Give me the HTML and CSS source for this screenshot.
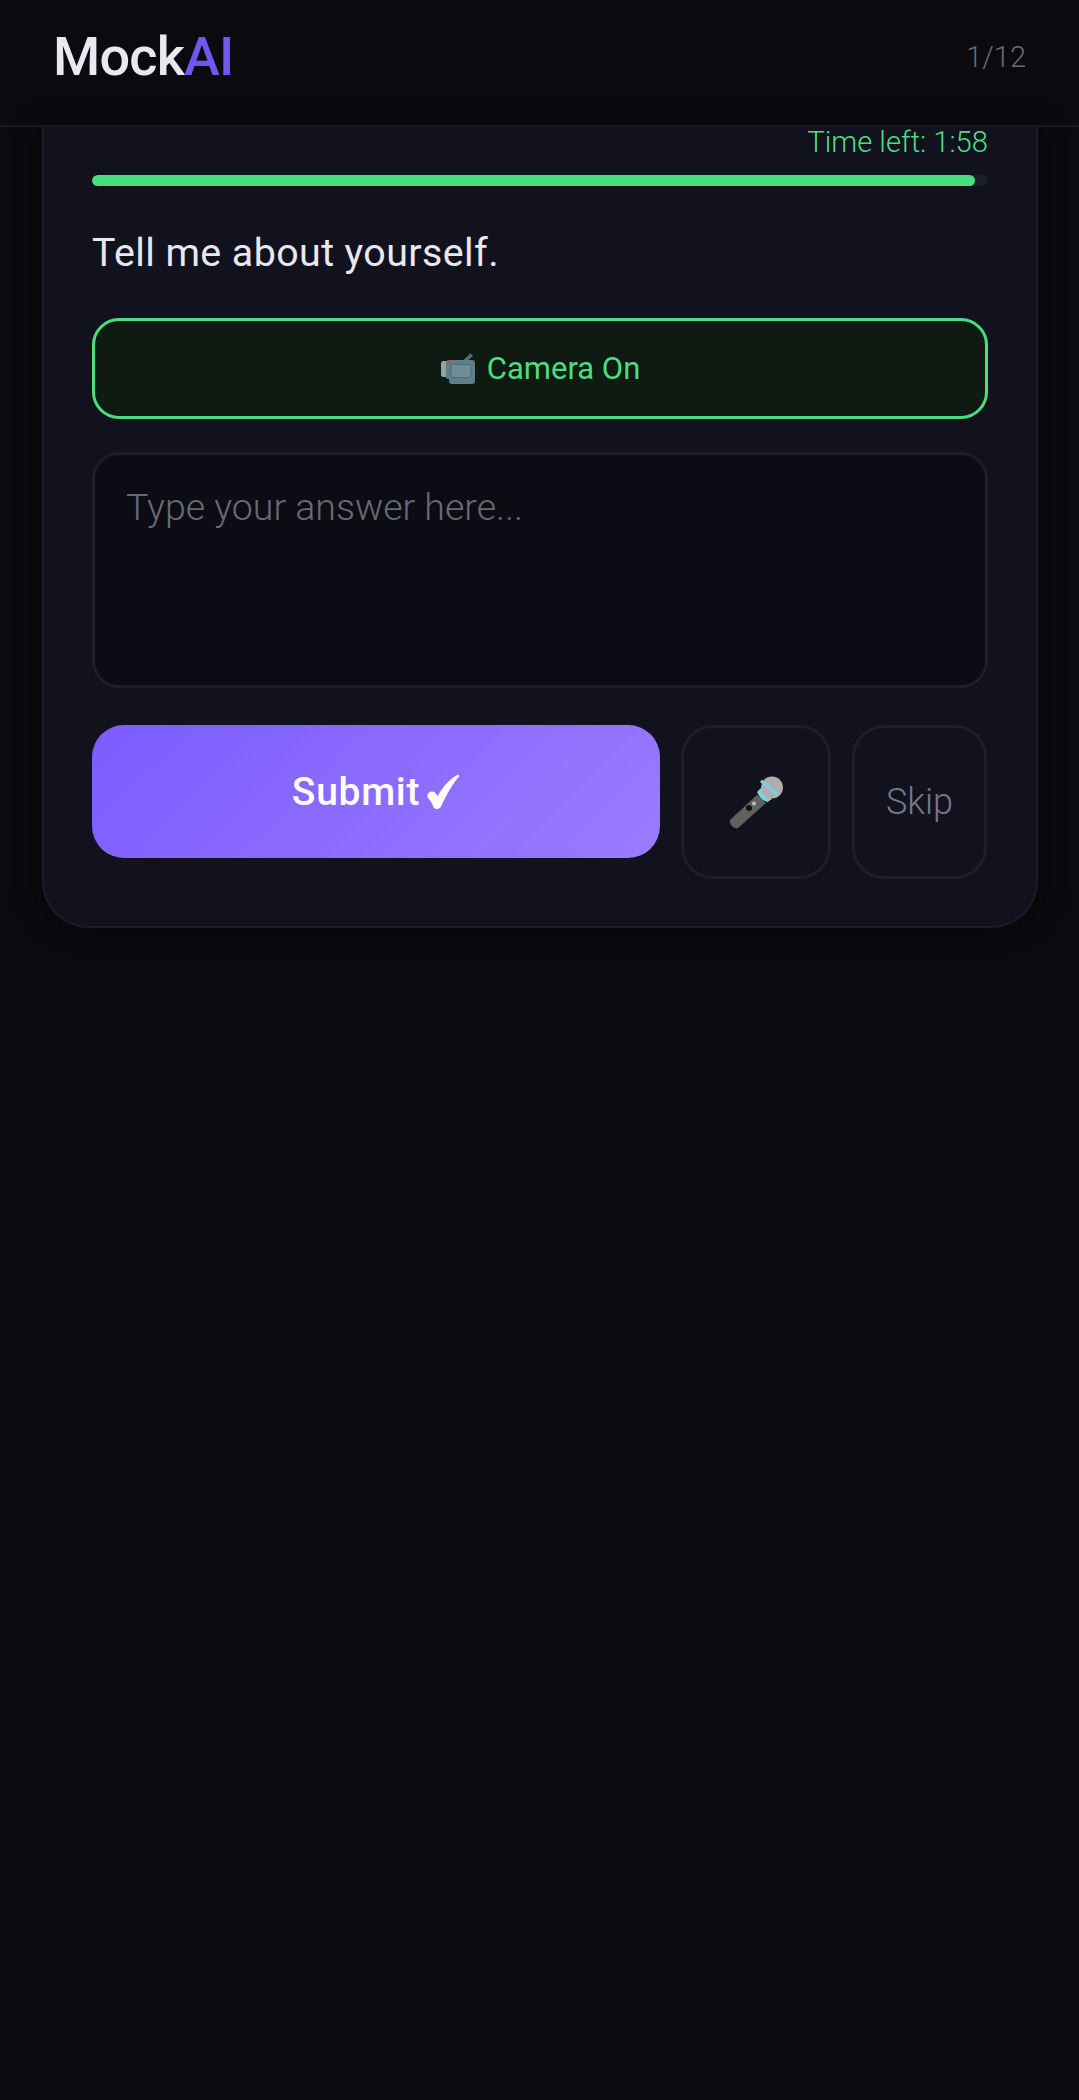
FILE: index.html
```html
<!DOCTYPE html>
<html lang="en">
<head>
<meta charset="utf-8">
<title>MockAI</title>
<link rel="stylesheet" href="styles.css">
</head>
<body>
<header class="topbar">
  <div class="logo">Mock<span class="logo-accent">AI</span></div>
  <div class="counter">1/12</div>
</header>
<main class="page">
  <section class="card">
    <div class="timer">Time left: 1:58</div>
    <div class="track"><div class="fill" style="width:98.6%"></div></div>
    <h1 class="question">Tell me about yourself.</h1>
    <button class="camera">
      <svg class="camera-icon" viewBox="0 0 36 33" aria-hidden="true">
        <path d="M21 10 L30.5 1.5 L33 4 L26 10z" fill="#546e7a"/>
        <rect x="1" y="9" width="7" height="16" rx="2.5" fill="#90a4ae"/>
        <path d="M6 11 Q6 8 9 8 H32 Q35 8 35 11 V29 Q35 32 32 32 H12 Q9 32 9 29 V27 H8 Q6 27 6 25z" fill="#607d8b"/>
        <rect x="11" y="12.500" width="20" height="13" rx="2" fill="#6f8c99" stroke="#4f6a76" stroke-width="1"/>
        <circle cx="9.500" cy="10" r="1.800" fill="#b5534f"/>
      </svg>
      <span>Camera On</span>
    </button>
    <div class="answer">Type your answer here...</div>
    <div class="actions">
      <button class="submit"><span>Submit</span>
        <svg class="check" viewBox="0 0 32 34" aria-hidden="true"><path d="M31.500 2 C27 7 20 18 14.500 30 C13 34 7.500 34 6.500 30 C5.500 27 3.500 25 1.500 22 C0 18 5 15 8.500 17.500 L11 21 C15 13 22 5 30 .5z" fill="#fff"/></svg>
      </button>
      <button class="ghost mic">
        <svg class="mic-icon" viewBox="0 0 55 53" aria-hidden="true">
          <path d="M28 19 L37 27 L9 52 Q6 53 3 50 Q0 47 1 44z" fill="#616161"/>
          <path d="M28 16 L32 12 L43 23 L38.500 26 Q32 25 28 16z" fill="#7fd0dc"/>
          <circle cx="43" cy="11.500" r="11" fill="#aeaeae"/>
          <path d="M31 6 L33 3.500 L50 17 L47.500 20z" fill="#7fd0dc"/>
          <circle cx="20" cy="32" r="3" fill="#111"/>
          <circle cx="25" cy="27.500" r="2" fill="#bdbdbd"/>
        </svg>
      </button>
      <button class="ghost skip">Skip</button>
    </div>
  </section>
</main>
</body>
</html>
```
FILE: styles.css
```css
* { box-sizing: border-box; }
html, body { margin: 0; height: 100%; }
body {
  background: #0a0a0f;
  font-family: Roboto, "Liberation Sans", sans-serif;
  color: #e8e8f0;
}
.topbar {
  height: 127px;
  padding: 0 53px 11px;
  display: flex;
  align-items: center;
  justify-content: space-between;
  background: #0a0a0f;
  border-bottom: 2px solid #1a1a26;
}
.logo { font-size: 54px; font-weight: 500; line-height: 1; letter-spacing: -0.8px; color: #e8e8f0; }
.logo-accent { color: #6f58f0; }
.counter { font-size: 29px; font-weight: 300; color: #6a6a7a; }
.page { padding: 0 41px 0 42px; }
.card {
  background: #12121e;
  border: 2px solid #1c1c28;
  border-top: none;
  border-radius: 0 0 47px 47px;
  padding: 0 48px 47px;
  box-shadow: 0 0 30px rgba(0, 0, 0, 0.35);
}
.timer {
  font-size: 29.200px;
  font-weight: 300;
  line-height: 30px;
  color: #4ade80;
  text-align: right;
}
.track { height: 11px; margin-top: 18px; background: #1e1e2a; border-radius: 6px; overflow: hidden; }
.fill { height: 100%; background: #4ade80; border-radius: 6px; }
.question { margin: 43px 0 0; font-size: 39.400px; font-weight: 400; line-height: 48px; letter-spacing: 0.4px; color: #e8e8f0; }
.camera {
  margin-top: 41px;
  width: 100%;
  height: 101px;
  display: flex;
  align-items: center;
  justify-content: center;
  gap: 11px;
  background: #0f1a12;
  border: 3px solid #4ade80;
  border-radius: 27px;
  color: #4ade80;
  font: 400 31px Roboto, sans-serif;
}
.camera-icon { width: 36px; height: 33px; }
.answer {
  margin-top: 33px;
  height: 236px;
  padding: 30px 31px;
  background: #0c0c15;
  border: 3px solid #1e1e2a;
  border-radius: 27px;
  font-size: 37.500px;
  font-weight: 300;
  line-height: 44px;
  color: #6a6a72;
}
.actions { margin-top: 37px; display: flex; align-items: flex-start; gap: 21px; }
button { cursor: pointer; padding: 0; }
.submit {
  flex: 0 0 568px;
  height: 133px;
  display: flex;
  align-items: center;
  justify-content: center;
  gap: 6px;
  border: none;
  border-radius: 32px;
  background: linear-gradient(135deg, #7c5cff, #9b7bff);
  color: #fff;
  font: 500 39px Roboto, sans-serif;
  letter-spacing: 0.7px;
}
.check { width: 34px; height: 36px; }
.ghost {
  height: 154px;
  display: flex;
  align-items: center;
  justify-content: center;
  background: transparent;
  border: 3px solid #1e1e2a;
  border-radius: 32px;
}
.mic { flex: 0 0 150px; }
.mic-icon { width: 55px; height: 53px; }
.skip { flex: 0 0 135px; color: #77778a; font: 300 36px Roboto, sans-serif; }
```
